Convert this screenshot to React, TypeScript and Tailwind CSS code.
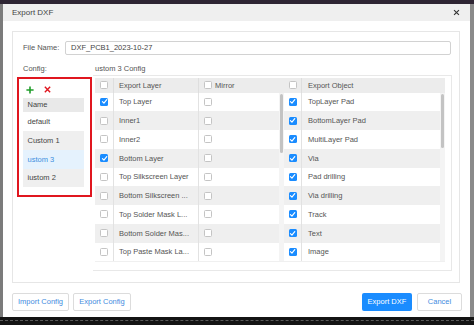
import React from "react";

const Check = ({ checked }: { checked?: boolean }) =>
  checked ? (
    <span className="flex w-[8px] h-[8px] items-center justify-center rounded-[1.5px] bg-[#1a8cff] shrink-0">
      <svg width="7" height="7" viewBox="0 0 10 10">
        <path d="M2 5.2 L4.2 7.4 L8.2 2.2" stroke="#fff" strokeWidth="1.6" fill="none" strokeLinecap="round" strokeLinejoin="round" />
      </svg>
    </span>
  ) : (
    <span className="block w-[8px] h-[8px] rounded-[1.5px] border border-[#c4c4c4] bg-white shrink-0" />
  );

const layers: [string, boolean][] = [
  ["Top Layer", true],
  ["Inner1", false],
  ["Inner2", false],
  ["Bottom Layer", true],
  ["Top Silkscreen Layer", false],
  ["Bottom Silkscreen ...", false],
  ["Top Solder Mask L...", false],
  ["Bottom Solder Mas...", false],
  ["Top Paste Mask La...", false],
];

const objects = [
  "TopLayer Pad",
  "BottomLayer Pad",
  "MultiLayer Pad",
  "Via",
  "Pad drilling",
  "Via drilling",
  "Track",
  "Text",
  "Image",
];

export default function App() {
  return (
    <div className="w-[474px] h-[325px] flex flex-col overflow-hidden bg-[#151515] font-['Liberation_Sans',Arial,sans-serif] text-[7.5px] text-[#555]">
      <div className="h-[4px] bg-[#2e2533] shrink-0" />
      <div className="flex h-[313px] shrink-0">
        <div className="w-[3px] bg-[#7b7b7b]" />
        <div className="w-[467px] bg-white flex flex-col">
          {/* title bar */}
          <div className="h-[17px] bg-[#efefef] flex items-center justify-between pl-[9px] pr-[10px] shrink-0">
            <span className="text-[8px] text-[#444]">Export DXF</span>
            <svg width="7" height="7" viewBox="0 0 10 10">
              <path d="M1.5 1.5 L8.5 8.5 M8.5 1.5 L1.5 8.5" stroke="#333" strokeWidth="1.6" />
            </svg>
          </div>
          {/* body */}
          <div className="pl-[9px] pt-[10px]">
            <div className="w-[448px] h-[252px] border border-[#e6e6e6] flex flex-col">
              <div className="mt-[9px] h-[14px] flex items-center">
                <span className="w-[52px] pl-[10px] shrink-0">File Name:</span>
                <div className="w-[386px] h-[14px] border border-[#d2d2d2] rounded-[2px] flex items-center pl-[5px] text-[#444]">
                  DXF_PCB1_2023-10-27
                </div>
              </div>
              <div className="mt-[8px] h-[12px] flex items-center">
                <span className="w-[82px] pl-[10px] shrink-0">Config:</span>
                <span>ustom 3 Config</span>
              </div>
              <div className="flex h-[196px] pl-[4px]">
                {/* config list (highlighted) */}
                <div className="mt-[2px] w-[75px] h-[120px] border-[2.5px] border-[#e0161f] flex flex-col shrink-0">
                  <div className="h-[19px] flex items-center pl-[7px] gap-[10px] pt-[2px]">
                    <svg width="8" height="8" viewBox="0 0 10 10">
                      <path d="M5 0.5 V9.5 M0.5 5 H9.5" stroke="#1f9d2a" strokeWidth="2" />
                    </svg>
                    <svg width="7" height="7" viewBox="0 0 10 10">
                      <path d="M1.2 1.2 L8.8 8.8 M8.8 1.2 L1.2 8.8" stroke="#e0161f" strokeWidth="2" />
                    </svg>
                  </div>
                  <div className="ml-[3.5px] w-[61px] h-[89px] bg-[#efefef] flex flex-col">
                    <div className="h-[14px] bg-[#e9e9e9] flex items-center pl-[5px] text-[#444]">Name</div>
                    <div className="h-[19px] bg-white flex items-center pl-[5px] text-[#444]">default</div>
                    <div className="h-[19px] bg-[#efefef] flex items-center pl-[5px] text-[#444]">Custom 1</div>
                    <div className="h-[19px] bg-[#e5f2fd] flex items-center pl-[5px] text-[#3d8fe0]">ustom 3</div>
                    <div className="h-[18px] bg-[#efefef] flex items-center pl-[5px] text-[#444]">iustom 2</div>
                  </div>
                </div>
                {/* tables panel */}
                <div className="ml-[1px] w-[359px] h-[196px] border border-[#e8e8e8] border-l-0 pt-[2px] pl-[2px] flex">
                  {/* table 1 */}
                  <div className="w-[189px] h-[184px] bg-[#f0f0f0] flex flex-col">
                    <div className="h-[14.5px] flex bg-[#ececec] shrink-0">
                      <div className="w-[19px] flex items-center justify-center border-r border-[#dedede]"><Check /></div>
                      <div className="w-[85px] flex items-center pl-[5px] border-r border-[#dedede]">Export Layer</div>
                      <div className="flex-1 flex items-center pl-[5px] gap-[3px]"><Check /><span>Mirror</span></div>
                    </div>
                    <div className="flex">
                      <div className="flex-1 flex flex-col">
                        {layers.map(([name, c], i) => (
                          <div key={name} className={`h-[18.75px] flex ${i % 2 === 1 ? "bg-[#efefef]" : "bg-white"}`}>
                            <div className="w-[19px] flex items-center justify-center border-r border-[#e2e2e2]"><Check checked={c} /></div>
                            <div className="w-[85px] flex items-center pl-[5px] border-r border-[#e2e2e2] whitespace-nowrap overflow-hidden">{name}</div>
                            <div className="flex-1 flex items-center pl-[5px]"><Check /></div>
                          </div>
                        ))}
                      </div>
                      <div className="w-[5px] bg-[#f4f4f4] pt-[1px] flex flex-col items-center">
                        <div className="w-[3.5px] h-[59px] rounded-[2px] bg-[#c3c3c3]" />
                      </div>
                    </div>
                  </div>
                  {/* table 2 */}
                  <div className="w-[161px] h-[184px] bg-[#f0f0f0] flex flex-col">
                    <div className="h-[14.5px] flex bg-[#ececec] shrink-0">
                      <div className="w-[18px] flex items-center justify-center border-r border-[#dedede]"><Check /></div>
                      <div className="flex-1 flex items-center pl-[6px]">Export Object</div>
                    </div>
                    <div className="flex">
                      <div className="flex-1 flex flex-col">
                        {objects.map((name, i) => (
                          <div key={name} className={`h-[18.75px] flex ${i % 2 === 1 ? "bg-[#efefef]" : "bg-white"}`}>
                            <div className="w-[18px] flex items-center justify-center border-r border-[#e2e2e2]"><Check checked /></div>
                            <div className="flex-1 flex items-center pl-[6px] whitespace-nowrap">{name}</div>
                          </div>
                        ))}
                      </div>
                      <div className="w-[5px] bg-[#f4f4f4] pt-[1px] flex flex-col items-center">
                        <div className="w-[3.5px] h-[54px] rounded-[2px] bg-[#c3c3c3]" />
                      </div>
                    </div>
                  </div>
                </div>
              </div>
            </div>
          </div>
          {/* footer */}
          <div className="mt-[10px] flex justify-between pl-[9px] pr-[8px]">
            <div className="flex gap-[4px]">
              <button className="w-[57px] h-[18px] border border-[#dcdcdc] rounded-[2px] bg-white text-[#3f8ce0] flex items-center justify-center">Import Config</button>
              <button className="w-[58px] h-[18px] border border-[#dcdcdc] rounded-[2px] bg-white text-[#3f8ce0] flex items-center justify-center">Export Config</button>
            </div>
            <div className="flex gap-[5px]">
              <button className="w-[50px] h-[18px] rounded-[2px] bg-[#1a8cff] text-white flex items-center justify-center">Export DXF</button>
              <button className="w-[45px] h-[18px] border border-[#dcdcdc] rounded-[2px] bg-white text-[#3f8ce0] flex items-center justify-center">Cancel</button>
            </div>
          </div>
        </div>
        <div className="w-[4px] bg-[#8a8a8a]" />
      </div>
      <div className="h-[8px] bg-[#141414] pt-[3px] shrink-0">
        <div className="border-t border-dashed border-[#5a5a5a]" />
      </div>
    </div>
  );
}
